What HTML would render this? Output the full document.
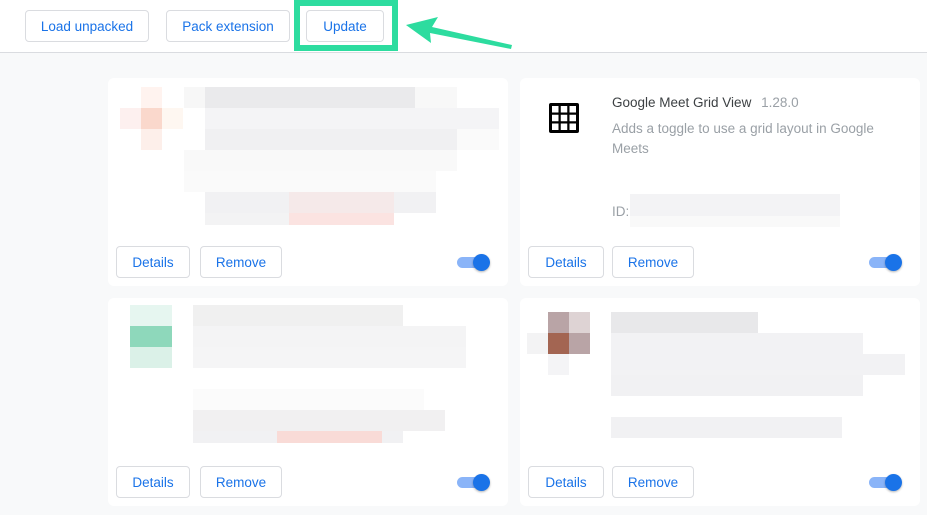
<!DOCTYPE html>
<html><head><style>
*{margin:0;padding:0;box-sizing:border-box}
body{width:927px;height:515px;background:#f8f9fa;font-family:"Liberation Sans",sans-serif;position:relative;overflow:hidden}
.hdr{position:absolute;left:0;top:0;width:927px;height:53px;background:#fff;border-bottom:1px solid #dadce0}
.btn{position:absolute;height:32px;border:1px solid #dadce0;border-radius:4px;background:#fff;color:#1a73e8;font-size:13.5px;display:flex;align-items:center;justify-content:center}
.card{position:absolute;width:400px;height:208px;background:#fff;border-radius:6px}
.b{position:absolute}
.tg{position:absolute;width:24px;height:11px;border-radius:6px;background:#8ab4f8}
.tg:after{content:"";position:absolute;left:16px;top:-3px;width:17px;height:17px;border-radius:50%;background:#1a73e8;box-shadow:0 1px 2px rgba(0,0,0,.3)}
</style></head><body>
<div class="hdr"></div>
<div class="btn" style="left:25px;top:10px;width:124px">Load unpacked</div>
<div class="btn" style="left:166px;top:10px;width:124px">Pack extension</div>
<div class="btn" style="left:306px;top:10px;width:78px">Update</div>
<div style="position:absolute;left:294px;top:0;width:104px;height:51px;border:6px solid #2ddc9f"></div>
<svg style="position:absolute;left:0;top:0" width="927" height="60"><polygon points="406,25 438,17 432,27 512,45 511,49 430,33 431,43" fill="#2ddc9f"/></svg>

<div class="card" style="left:108px;top:78px">
 <div class="b" style="left:33px;top:9px;width:21px;height:21px;background:#fff3ef"></div>
 <div class="b" style="left:12px;top:30px;width:21px;height:21px;background:#fdf0ef"></div>
 <div class="b" style="left:33px;top:30px;width:21px;height:21px;background:#fad8cc"></div>
 <div class="b" style="left:54px;top:30px;width:21px;height:21px;background:#fef7f1"></div>
 <div class="b" style="left:33px;top:51px;width:21px;height:21px;background:#fdefea"></div>
 <div class="b" style="left:76px;top:9px;width:21px;height:21px;background:#f7f7f7"></div>
 <div class="b" style="left:97px;top:9px;width:210px;height:21px;background:#eaeaec"></div>
 <div class="b" style="left:307px;top:9px;width:42px;height:21px;background:#f8f8f8"></div>
 <div class="b" style="left:97px;top:30px;width:294px;height:21px;background:#f4f4f6"></div>
 <div class="b" style="left:97px;top:51px;width:252px;height:21px;background:#f0f0f2"></div>
 <div class="b" style="left:349px;top:51px;width:42px;height:21px;background:#fafafa"></div>
 <div class="b" style="left:76px;top:72px;width:273px;height:21px;background:#f9f9f9"></div>
 <div class="b" style="left:76px;top:93px;width:252px;height:21px;background:#fafafa"></div>
 <div class="b" style="left:97px;top:114px;width:231px;height:21px;background:#f1f1f3"></div>
 <div class="b" style="left:181px;top:114px;width:105px;height:21px;background:#f5e9e9"></div>
 <div class="b" style="left:97px;top:135px;width:84px;height:12px;background:#f3f3f4"></div>
 <div class="b" style="left:181px;top:135px;width:105px;height:12px;background:#fbe3e1"></div>
 <div class="btn" style="left:8px;top:168px;width:74px">Details</div>
 <div class="btn" style="left:92px;top:168px;width:82px">Remove</div>
 <div class="tg" style="left:349px;top:179px"></div>
</div>

<div class="card" style="left:520px;top:78px">
 <svg class="b" style="left:29px;top:25px" width="30" height="30" viewBox="0 0 30 30"><rect x="0" y="0" width="30" height="30" rx="2" fill="#000"/><g fill="#fff"><rect x="3" y="3" width="6.5" height="6.5"/><rect x="11.75" y="3" width="6.5" height="6.5"/><rect x="20.5" y="3" width="6.5" height="6.5"/><rect x="3" y="11.75" width="6.5" height="6.5"/><rect x="11.75" y="11.75" width="6.5" height="6.5"/><rect x="20.5" y="11.75" width="6.5" height="6.5"/><rect x="3" y="20.5" width="6.5" height="6.5"/><rect x="11.75" y="20.5" width="6.5" height="6.5"/><rect x="20.5" y="20.5" width="6.5" height="6.5"/></g></svg>
 <div class="b" style="left:92px;top:17px;font-size:13.5px;color:#3c4043;white-space:nowrap">Google Meet Grid View <span style="color:#9aa0a6;margin-left:6px">1.28.0</span></div>
 <div class="b" style="left:92px;top:41px;width:290px;font-size:13.5px;line-height:20px;color:#9aa0a6">Adds a toggle to use a grid layout in Google Meets</div>
 <div class="b" style="left:92px;top:126px;font-size:13.5px;color:#9aa0a6">ID:</div>
 <div class="b" style="left:110px;top:116px;width:210px;height:22px;background:#f3f3f5"></div>
 <div class="b" style="left:110px;top:138px;width:210px;height:11px;background:#f9f9f9"></div>
 <div class="btn" style="left:8px;top:168px;width:76px">Details</div>
 <div class="btn" style="left:92px;top:168px;width:82px">Remove</div>
 <div class="tg" style="left:349px;top:179px"></div>
</div>

<div class="card" style="left:108px;top:298px">
 <div class="b" style="left:22px;top:7px;width:42px;height:21px;background:#e6f6f0"></div>
 <div class="b" style="left:22px;top:28px;width:42px;height:21px;background:#8ed8bb"></div>
 <div class="b" style="left:22px;top:49px;width:42px;height:21px;background:#dbf1e8"></div>
 <div class="b" style="left:85px;top:7px;width:210px;height:21px;background:#f0f0f0"></div>
 <div class="b" style="left:85px;top:28px;width:273px;height:21px;background:#f4f4f5"></div>
 <div class="b" style="left:85px;top:49px;width:273px;height:21px;background:#f5f5f6"></div>
 <div class="b" style="left:85px;top:91px;width:231px;height:21px;background:#fbfbfb"></div>
 <div class="b" style="left:85px;top:112px;width:252px;height:21px;background:#f1f0f1"></div>
 <div class="b" style="left:85px;top:133px;width:210px;height:12px;background:#f1f1f3"></div>
 <div class="b" style="left:169px;top:133px;width:105px;height:12px;background:#f9dbd7"></div>
 <div class="btn" style="left:8px;top:168px;width:74px">Details</div>
 <div class="btn" style="left:92px;top:168px;width:82px">Remove</div>
 <div class="tg" style="left:349px;top:179px"></div>
</div>

<div class="card" style="left:520px;top:298px">
 <div class="b" style="left:28px;top:14px;width:21px;height:21px;background:#b9a4a6"></div>
 <div class="b" style="left:49px;top:14px;width:21px;height:21px;background:#ded3d4"></div>
 <div class="b" style="left:7px;top:35px;width:21px;height:21px;background:#f3f3f4"></div>
 <div class="b" style="left:28px;top:35px;width:21px;height:21px;background:#a36552"></div>
 <div class="b" style="left:49px;top:35px;width:21px;height:21px;background:#b9a4a6"></div>
 <div class="b" style="left:28px;top:56px;width:21px;height:21px;background:#f4f4f6"></div>
 <div class="b" style="left:91px;top:14px;width:147px;height:21px;background:#e8e8ea"></div>
 <div class="b" style="left:91px;top:35px;width:252px;height:21px;background:#f2f2f4"></div>
 <div class="b" style="left:91px;top:56px;width:294px;height:21px;background:#f2f2f4"></div>
 <div class="b" style="left:91px;top:77px;width:252px;height:21px;background:#f1f1f3"></div>
 <div class="b" style="left:91px;top:119px;width:231px;height:21px;background:#f1f1f3"></div>
 <div class="btn" style="left:8px;top:168px;width:76px">Details</div>
 <div class="btn" style="left:92px;top:168px;width:82px">Remove</div>
 <div class="tg" style="left:349px;top:179px"></div>
</div>
</body></html>
